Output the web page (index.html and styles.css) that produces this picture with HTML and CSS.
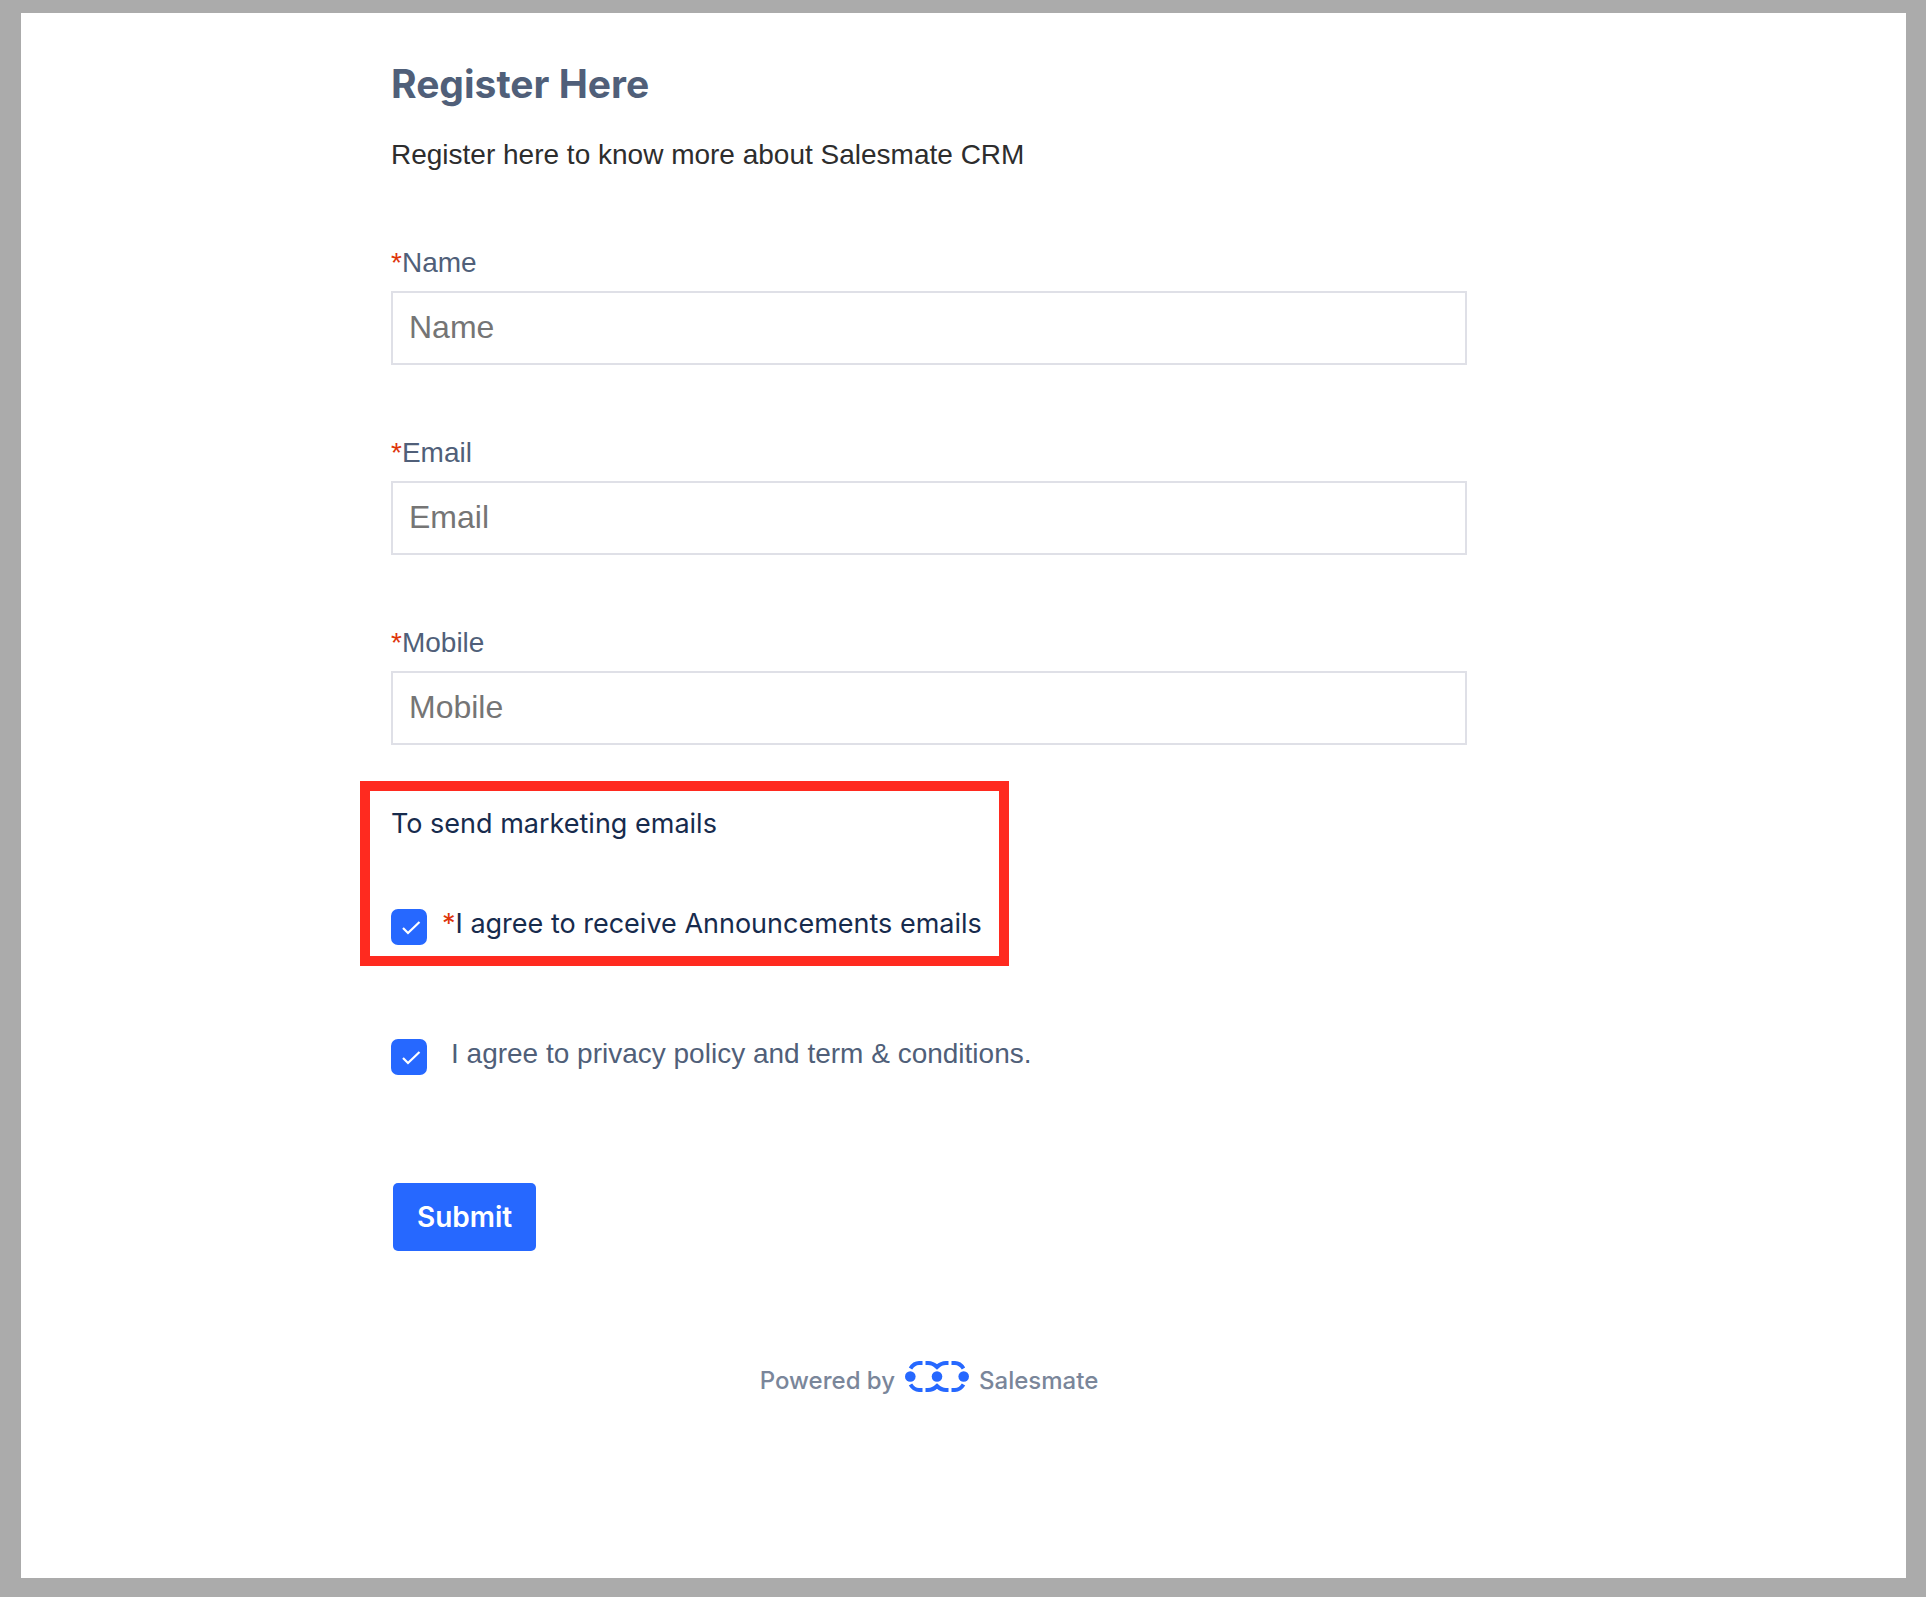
FILE: index.html
```html
<!DOCTYPE html>
<html lang="en">
<head>
  <meta charset="UTF-8">
  <meta name="viewport" content="width=device-width, initial-scale=1.0">
  <title>Register Here</title>
  <link rel="stylesheet" href="styles.css">
</head>
<body>
  <main class="panel">
    <form class="form">
      <h1>Register Here</h1>
      <p class="description">Register here to know more about Salesmate CRM</p>

      <div class="field">
        <label for="name"><span class="required">*</span>Name</label>
        <input type="text" id="name" placeholder="Name" required>
      </div>
      <div class="field">
        <label for="email"><span class="required">*</span>Email</label>
        <input type="email" id="email" placeholder="Email" required>
      </div>
      <div class="field">
        <label for="mobile"><span class="required">*</span>Mobile</label>
        <input type="tel" id="mobile" placeholder="Mobile" required>
      </div>

      <div class="consent">
        <p>To send marketing emails</p>
        <div class="check-row">
          <input type="checkbox" id="announcements" checked required>
          <label for="announcements"><span class="required">*</span>I agree to receive Announcements emails</label>
        </div>
      </div>

      <div class="check-row privacy">
        <input type="checkbox" id="privacy" checked>
        <label for="privacy">I agree to privacy policy and term &amp; conditions.</label>
      </div>

      <button type="submit">Submit</button>

      <footer>
        <span>Powered by</span>
        <svg class="logo" width="64" height="31" viewBox="0 0 64 31" aria-hidden="true">
          <g fill="none" stroke="#2668ff" stroke-width="4">
            <path d="M5.500 7.500C8 3.500 10 2 14 2H17.500M20.500 2H23C27 2 29.500 3.500 32 6C34.500 3.500 37 2 41 2H43.500M46.500 2H50C54 2 56 3.500 58.500 7.500"/>
            <path d="M5.500 23.500C8 27.500 10 29 14 29H17.500M20.500 29H23C27 29 29.500 27.500 32 25C34.500 27.500 37 29 41 29H43.500M46.500 29H50C54 29 56 27.500 58.500 23.500"/>
          </g>
          <g fill="#2668ff">
            <circle cx="5.300" cy="15.500" r="5.300"/>
            <circle cx="32" cy="15.500" r="5.300"/>
            <circle cx="58.700" cy="15.500" r="5.300"/>
          </g>
        </svg>
        <span>Salesmate</span>
      </footer>
    </form>
  </main>
</body>
</html>
```
FILE: styles.css
```css
* {
  box-sizing: border-box;
}
body {
  margin: 0;
  min-height: 100vh;
  padding: 13px 20px 19px 21px;
  display: flex;
  background-color: #ababab;
  font-family: "Liberation Sans", Arial, sans-serif;
  font-size: 28px;
  line-height: 36px;
  color: #505f79;
}
.panel {
  flex: 1;
  padding: 47px 69px 46px 0;
  background-color: #fff;
}
.form {
  max-width: 1076px;
  margin: 0 auto;
}
h1 {
  margin: 0;
  font-family: Inter, sans-serif;
  font-size: 39px;
  line-height: 48px;
  font-weight: 700;
}
p {
  margin: 0;
}
.description {
  margin: 29px 0 72px;
  color: #2d2d2d;
}
.required {
  color: #de350b;
}
.field {
  display: flex;
  flex-direction: column;
  gap: 10px;
  margin-bottom: 70px;
}
.field input {
  width: 100%;
  height: 74px;
  padding: 0 16px 2px;
  border: 2px solid #dfe0e7;
  background-color: #fff;
  font-family: inherit;
  font-size: 32px;
  color: #2d2d2d;
}
.field input::placeholder {
  color: #757575;
}
.consent {
  width: fit-content;
  margin: -34px 0 70px -31px;
  padding: 15px 17px 11px 21px;
  border: 10px solid #ff2a1f;
  font-family: Inter, sans-serif;
  font-size: 27px;
  color: #172b4d;
}
.consent p {
  margin-bottom: 64px;
}
.check-row {
  display: flex;
  align-items: flex-start;
  gap: 15px;
}
.check-row input {
  appearance: none;
  flex: none;
  width: 36px;
  height: 36px;
  margin: 3px 0 0;
  border: 2px solid #2668ff;
  border-radius: 7px;
}
.check-row input:checked {
  background: #2668ff url("data:image/svg+xml,%3Csvg xmlns='http://www.w3.org/2000/svg' viewBox='0 0 36 36'%3E%3Cpath d='M12 19l5 5L28.500 13' fill='none' stroke='white' stroke-width='2.200'/%3E%3C/svg%3E") center / 36px 36px no-repeat;
}
.privacy {
  gap: 24px;
  margin-bottom: 108px;
}
button {
  display: block;
  height: 68px;
  margin-left: 2px;
  padding: 0 24px;
  border: none;
  border-radius: 5px;
  background-color: #2668ff;
  font-family: Inter, sans-serif;
  font-size: 28px;
  font-weight: 600;
  color: #fff;
  cursor: pointer;
}
button:hover {
  background-color: #1555e8;
}
footer {
  display: flex;
  justify-content: center;
  align-items: center;
  gap: 10px;
  margin-top: 110px;
  font-family: Inter, sans-serif;
  font-size: 24px;
  line-height: 32px;
  font-weight: 500;
  color: #7a869a;
}
.logo {
  margin-bottom: 9px;
}
```
